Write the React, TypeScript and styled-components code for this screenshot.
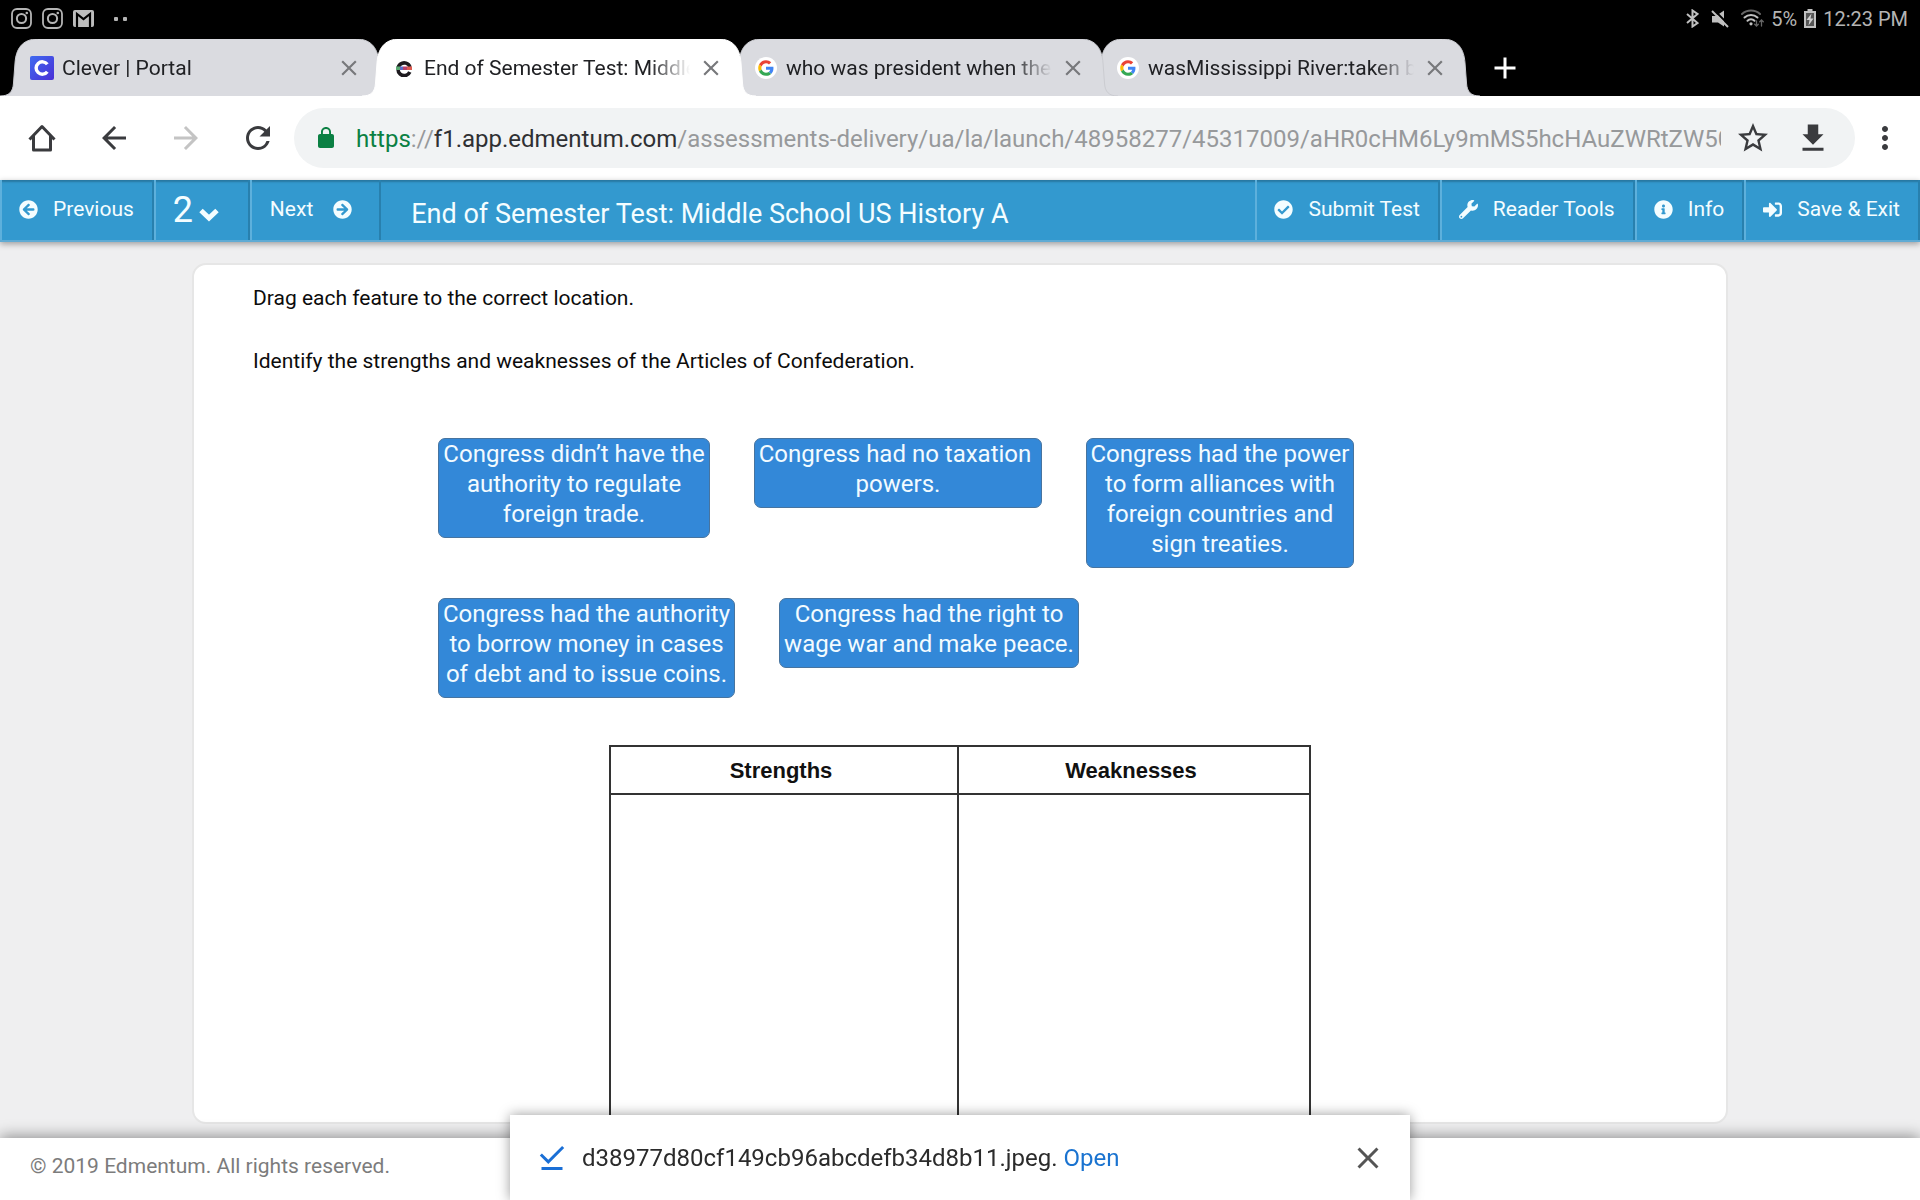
import React from "react";
import styled, { createGlobalStyle } from "styled-components";
import {
  MdAdd,
  MdArrowBack,
  MdArrowForward,
  MdClose,
  MdDownloadDone,
  MdMoreVert,
  MdRefresh,
  MdStarBorder,
} from "react-icons/md";
import {
  FaArrowCircleLeft,
  FaArrowCircleRight,
  FaCheckCircle,
  FaInfoCircle,
  FaSignInAlt,
  FaWrench,
} from "react-icons/fa";

const GlobalStyle = createGlobalStyle`
  * { box-sizing: border-box; }
  body { margin: 0; font-family: Roboto, "Liberation Sans", sans-serif; }
  button, select { font: inherit; color: inherit; background: none; border: 0; padding: 0; margin: 0; cursor: pointer; }
  svg { display: block; flex: none; }
`;

const Screen = styled.div`
  display: flex;
  flex-direction: column;
  height: 100vh;
  overflow: hidden;
  background: #efeff0;
`;

/* ---------- status bar ---------- */

const StatusBar = styled.div`
  display: flex;
  align-items: center;
  justify-content: space-between;
  height: 39px;
  flex: none;
  padding: 0 12px 2px 11px;
  background: #000;
  color: #b4b4b4;
  font-size: 20px;
  line-height: 24px;
`;

const StatusGroup = styled.div<{ $gap: number }>`
  display: flex;
  align-items: center;
  gap: ${(p) => p.$gap}px;
`;

/* ---------- tab strip ---------- */

const TabStrip = styled.div`
  display: flex;
  height: 57px;
  flex: none;
  background: #000;
`;

const TabShell = styled.div<{ $color: string; $layer: number }>`
  position: relative;
  z-index: ${(p) => p.$layer};
  display: flex;
  align-items: center;
  flex: 0 1 394px;
  min-width: 0;
  margin-right: -32px;
  padding: 0 32px 0 30px;
  color: ${(p) => p.$color};
  &::before {
    content: "";
    position: absolute;
    inset: 0 38px;
    background: currentColor;
    z-index: -1;
  }
`;

const TabEdge = styled.svg<{ $side: "left" | "right" }>`
  position: absolute;
  top: 0;
  ${(p) => p.$side}: 0;
  z-index: -1;
  ${(p) => (p.$side === "right" ? "transform: scaleX(-1);" : "")}
`;

const TabTitle = styled.button`
  flex: 1;
  min-width: 0;
  overflow: hidden;
  margin-left: 8px;
  text-align: left;
  white-space: nowrap;
  font-size: 21px;
  line-height: 28px;
  color: #202124;
  mask-image: linear-gradient(to right, #000 calc(100% - 40px), transparent);
`;

const TabClose = styled.button`
  margin-left: 8px;
  color: #77787b;
`;

const NewTab = styled.button`
  margin-left: 39px;
  color: #fff;
`;

const Favicon = styled.span`
  display: grid;
  place-items: center;
  width: 24px;
  height: 24px;
  flex: none;
`;

/* ---------- browser toolbar ---------- */

const Toolbar = styled.div`
  display: flex;
  align-items: center;
  height: 84px;
  flex: none;
  padding: 0 5px 0 6px;
  background: #fff;
  color: #3a3b3e;
`;

const ToolButton = styled.button<{ $faded?: boolean }>`
  display: grid;
  place-items: center;
  width: 72px;
  height: 60px;
  flex: none;
  color: ${(p) => (p.$faded ? "#c4c4c4" : "#3a3b3e")};
`;

const Omnibox = styled.div`
  display: flex;
  align-items: center;
  flex: 1;
  min-width: 0;
  height: 60px;
  border-radius: 30px;
  padding: 0 12px 0 20px;
  background: #f1f3f4;
`;

const Address = styled.div`
  flex: 1;
  min-width: 0;
  margin: 2px 2px 0 18px;
  overflow: hidden;
  white-space: nowrap;
  font-size: 24px;
  line-height: 32px;
  color: #97999b;
`;

const Secure = styled.span`
  color: #0b8043;
`;

const Host = styled.span`
  color: #2f3033;
`;

const OmniButton = styled.button`
  display: grid;
  place-items: center;
  width: 60px;
  height: 60px;
  flex: none;
  color: #3a3b3e;
`;

/* ---------- test header ---------- */

const Header = styled.header`
  position: relative;
  z-index: 2;
  display: flex;
  height: 62px;
  flex: none;
  background: #3399cf;
  color: #f4fdff;
  border-bottom: 2px solid #5fabd4;
  box-shadow: 0 2px 6px rgba(0, 0, 0, 0.35), inset 0 2px 2px rgba(0, 0, 0, 0.22);
`;

const HeaderCell = styled.div`
  display: flex;
  flex: none;
  border-left: 2px solid #5db0dc;
  border-right: 2px solid #2880ae;
`;

const HeaderButton = styled.button`
  display: flex;
  align-items: center;
  gap: 15px;
  height: 58px;
  padding: 0 18px 0 17px;
  font-size: 21px;
  line-height: 28px;
`;

const NextButton = styled(HeaderButton)`
  gap: 20px;
  padding: 0 27px 0 18px;
`;

const QuestionPicker = styled.label`
  display: flex;
  align-items: baseline;
  height: 60px;
  padding: 8px 29px 0 17px;
`;

const QuestionSelect = styled.select`
  appearance: none;
  width: 26px;
  font-size: 36px;
  line-height: 44px;
  color: #f4fdff;
`;

const HeaderTitle = styled.h1`
  flex: 1;
  min-width: 0;
  margin: 0;
  padding: 16px 0 0 30px;
  overflow: hidden;
  white-space: nowrap;
  font-size: 27px;
  line-height: 36px;
  font-weight: 400;
`;

/* ---------- question ---------- */

const Main = styled.main`
  display: flex;
  justify-content: center;
  flex: 1;
  min-height: 0;
  padding: 21px 0 14px;
`;

const Card = styled.section`
  display: flex;
  flex-direction: column;
  width: 80%;
  overflow: hidden;
  padding: 18px 59px 0;
  border: 2px solid #e6e6e6;
  border-radius: 14px;
  background: #fff;
`;

const Prompt = styled.p`
  margin: 0 0 33px;
  font-size: 21px;
  line-height: 30px;
  color: #0c0c0c;
`;

const Choices = styled.div`
  display: flex;
  flex-wrap: wrap;
  align-items: flex-start;
  gap: 30px 44px;
  width: 1044px;
  max-width: 100%;
  margin: 29px auto 0;
`;

const Choice = styled.button<{ $width: number }>`
  width: ${(p) => p.$width}px;
  padding: 0 3px 8px;
  border: 1px solid #47749f;
  border-radius: 7px;
  background: #3388d8;
  color: #f2fbff;
  font-size: 24px;
  line-height: 30px;
  text-align: center;
  cursor: grab;
`;

const SortTable = styled.table`
  width: 702px;
  max-width: 100%;
  flex: none;
  margin: 47px auto 0;
  border-collapse: collapse;
  table-layout: fixed;
  font-family: "Liberation Sans", Arial, sans-serif;
`;

const HeadCell = styled.th`
  height: 48px;
  padding: 2px 6px 0 0;
  border: 2px solid #333;
  font-size: 22px;
  line-height: 28px;
  color: #111;
`;

const StrengthColumn = styled.col`
  width: 348px;
`;

const DropCell = styled.td`
  height: 420px;
  border: 2px solid #333;
`;

/* ---------- footer and download notice ---------- */

const Footer = styled.footer`
  display: flex;
  align-items: center;
  height: 62px;
  flex: none;
  padding: 0 30px 6px;
  background: #fff;
  box-shadow: 0 -2px 14px rgba(0, 0, 0, 0.4);
  font-size: 21px;
  line-height: 28px;
  color: #7c7c7c;
`;

const Snackbar = styled.div`
  position: fixed;
  z-index: 5;
  bottom: 0;
  left: 50%;
  transform: translateX(-50%);
  display: flex;
  align-items: center;
  width: 900px;
  max-width: 100%;
  height: 85px;
  padding: 0 24px;
  background: #fff;
  box-shadow: 0 0 12px rgba(0, 0, 0, 0.4);
  color: #2b2b2b;
  font-size: 24px;
  line-height: 32px;
`;

const SnackText = styled.p`
  flex: 1;
  min-width: 0;
  margin: 0 0 0 12px;
`;

const OpenLink = styled.a`
  color: #1a73d0;
  text-decoration: none;
`;

/* ---------- drawings ---------- */

const InstagramGlyph = () => (
  <svg width="21" height="21" viewBox="0 0 21 21" fill="none" stroke="#b4b4b4">
    <rect x="1" y="1" width="19" height="19" rx="5" strokeWidth="1.8" />
    <circle cx="10.5" cy="10.5" r="4.6" strokeWidth="2" />
    <circle cx="15.8" cy="5" r="1.3" fill="#b4b4b4" stroke="none" />
  </svg>
);

const MailGlyph = () => (
  <svg width="21" height="17" viewBox="0 0 21 17">
    <rect width="21" height="17" rx="2" fill="#bdbdbd" />
    <path d="M4 17V4l6.500 5L17 4v13" fill="none" stroke="#000" strokeWidth="2.200" />
  </svg>
);

const MoreDots = () => (
  <svg width="14" height="4" viewBox="0 0 14 4" fill="#b4b4b4">
    <rect width="4" height="4" rx="1" />
    <rect x="9" width="4" height="4" rx="1" />
  </svg>
);

const BluetoothGlyph = () => (
  <svg width="13" height="19" viewBox="0 0 13 19" fill="none" stroke="#c0c0c0" strokeWidth="2">
    <path d="M1 5l10.500 9L6.500 17.500v-16L11.500 5 1 14" />
  </svg>
);

const MutedGlyph = () => (
  <svg width="18" height="18" viewBox="0 0 18 18">
    <path d="M1 6h4l8-5.500v16L7 12.500H1z" fill="#c0c0c0" />
    <path d="M2.500 -.5l16 16" stroke="#000" strokeWidth="2" />
    <path d="M1 1l16 16" stroke="#c0c0c0" strokeWidth="2" />
  </svg>
);

const WifiGlyph = () => (
  <svg width="23" height="19" viewBox="0 0 23 19" fill="none" strokeLinecap="round">
    <path d="M1 5a13.500 13.500 0 0 1 18 0" stroke="#666" strokeWidth="2" />
    <path d="M3.500 8.500a9.500 9.500 0 0 1 13 0" stroke="#c0c0c0" strokeWidth="2" />
    <path d="M6.500 11.800a5 5 0 0 1 7 0" stroke="#c0c0c0" strokeWidth="2" />
    <circle cx="10" cy="14.800" r="1.600" fill="#c0c0c0" />
    <path d="M15.500 12v5m-1.800-1.800l1.800 1.800 1.800-1.800M20.500 17v-6m-1.800 1.800l1.800-1.800 1.800 1.800" stroke="#666" strokeWidth="1.300" />
  </svg>
);

const BatteryGlyph = () => (
  <svg width="12" height="19" viewBox="0 0 12 19">
    <path d="M3.500 0h5v2H12v17H0V2h3.500z" fill="#c0c0c0" />
    <path d="M2 4h8v13H2z" fill="#555" />
    <path d="M7.500 4.500L2.500 11h3l-1 5.500 5-7h-3z" fill="#d0d0d0" />
  </svg>
);

const CleverIcon = () => (
  <svg width="24" height="24" viewBox="0 0 24 24">
    <defs>
      <linearGradient id="clever" x1="0" y1="0" x2="1" y2="1">
        <stop offset="0" stopColor="#3f6bf0" />
        <stop offset="1" stopColor="#4a2fd6" />
      </linearGradient>
    </defs>
    <rect width="24" height="24" rx="2" fill="url(#clever)" />
    <path d="M17.300 8.300A6.200 6.200 0 1 0 17.300 15.700" fill="none" stroke="#fff" strokeWidth="3.400" />
  </svg>
);

const EdmentumIcon = () => (
  <svg width="18" height="18" viewBox="0 0 18 18">
    <path d="M14.800 13A6.200 6.400 0 1 1 15 8" fill="none" stroke="#1d1a1f" strokeWidth="3.600" />
    <path d="M1 7.500h4v3.500H1z" fill="#5aa872" />
    <path d="M5 7.500h3v3.500H5z" fill="#5b6cc4" />
    <path d="M8 7.500h4v3.500H8z" fill="#b8406c" />
    <path d="M12 7.500h5v3.500h-5z" fill="#dd5a50" />
  </svg>
);

const GoogleIcon = () => (
  <svg width="22" height="22" viewBox="0 0 22 22">
    <circle cx="11" cy="11" r="11" fill="#fff" />
    <g transform="translate(3.200 3.200) scale(.325)">
      <path fill="#EA4335" d="M24 9.500c3.540 0 6.710 1.220 9.210 3.600l6.850-6.850C35.900 2.380 30.470 0 24 0 14.620 0 6.510 5.380 2.560 13.220l7.980 6.190C12.430 13.720 17.740 9.500 24 9.500z" />
      <path fill="#4285F4" d="M46.980 24.550c0-1.570-.15-3.090-.38-4.550H24v9.020h12.940c-.58 2.960-2.260 5.480-4.780 7.180l7.730 6c4.510-4.180 7.090-10.360 7.090-17.650z" />
      <path fill="#FBBC05" d="M10.530 28.590c-.48-1.450-.76-2.990-.76-4.590s.27-3.140.76-4.590l-7.980-6.190C.92 16.460 0 20.120 0 24c0 3.880.92 7.540 2.560 10.780l7.970-6.190z" />
      <path fill="#34A853" d="M24 48c6.480 0 11.930-2.130 15.890-5.810l-7.730-6c-2.150 1.450-4.920 2.300-8.160 2.300-6.260 0-11.570-4.220-13.470-9.910l-7.980 6.190C6.510 42.620 14.620 48 24 48z" />
    </g>
  </svg>
);

const HomeGlyph = () => (
  <svg width="28" height="28" viewBox="0 0 28 28" fill="none" stroke="currentColor" strokeWidth="3" strokeLinejoin="round">
    <path d="M1.500 15.500 14 2.500l12.500 13" />
    <path d="M5.500 12v14h17V12" />
  </svg>
);

const LockGlyph = () => (
  <svg width="24" height="24" viewBox="0 0 24 24" fill="#0b8043">
    <path d="M18 8h-1V6c0-2.760-2.240-5-5-5S7 3.240 7 6v2H6c-1.100 0-2 .9-2 2v10c0 1.100.9 2 2 2h12c1.100 0 2-.9 2-2V10c0-1.100-.9-2-2-2zm-2.900 0H8.900V6a3.100 3.100 0 0 1 6.200 0z" />
  </svg>
);

const DownloadGlyph = () => (
  <svg width="36" height="36" viewBox="0 0 24 24" fill="currentColor">
    <path d="M19 9.500h-3.500V3h-7v6.500H5l7 7zM5 18.500V20.500h14v-2z" />
  </svg>
);

const ChevronGlyph = () => (
  <svg width="20" height="15" viewBox="0 0 20 15" fill="none" stroke="currentColor" strokeWidth="5">
    <path d="M2 3.500l8 7.500 8-7.500" />
  </svg>
);

type TabProps = { icon: React.ReactNode; title: string; layer: number; active?: boolean };

function Edge({ side, fill, outline }: { side: "left" | "right"; fill: string; outline: string }) {
  return (
    <TabEdge $side={side} width="40" height="57" viewBox="0 0 40 57" aria-hidden="true">
      <path d="M0 57C9 57 13 53 13.500 44L15 24C16 10 22 0 38 0H40V57Z" fill={fill} />
      <path d="M0 57C9 57 13 53 13.500 44L15 24C16 10 22 0 38 0" fill="none" stroke={outline} />
    </TabEdge>
  );
}

function Tab({ icon, title, layer, active }: TabProps) {
  const fill = active ? "#ffffff" : "#dadbe0";
  const outline = active ? "#ffffff" : "#cbccd1";
  return (
    <TabShell $color={fill} $layer={layer}>
      <Edge side="left" fill={fill} outline={outline} />
      <Edge side="right" fill={fill} outline={outline} />
      <Favicon>{icon}</Favicon>
      <TabTitle>{title}</TabTitle>
      <TabClose aria-label="Close tab">
        <MdClose size={26} />
      </TabClose>
    </TabShell>
  );
}

const choices = [
  { text: "Congress didn’t have the authority to regulate foreign trade.", width: 272 },
  { text: "Congress had no taxation\u00a0 powers.", width: 288 },
  { text: "Congress had the power to form alliances with foreign countries and sign treaties.", width: 268 },
  { text: "Congress had the authority to borrow money in cases of debt and to issue coins.", width: 297 },
  { text: "Congress had the right to wage war and make peace.", width: 300 },
];

export default function App() {
  return (
    <Screen>
      <GlobalStyle />
      <StatusBar>
        <StatusGroup $gap={10}>
          <InstagramGlyph />
          <InstagramGlyph />
          <MailGlyph />
          <span />
          <MoreDots />
        </StatusGroup>
        <StatusGroup $gap={7}>
          <StatusGroup $gap={12}>
            <BluetoothGlyph />
            <MutedGlyph />
            <WifiGlyph />
          </StatusGroup>
          <span>5%</span>
          <BatteryGlyph />
          <span>12:23 PM</span>
        </StatusGroup>
      </StatusBar>

      <TabStrip>
        <Tab icon={<CleverIcon />} title="Clever | Portal" layer={1} />
        <Tab icon={<EdmentumIcon />} title="End of Semester Test: Middle School" layer={4} active />
        <Tab icon={<GoogleIcon />} title="who was president when the" layer={3} />
        <Tab icon={<GoogleIcon />} title="wasMississippi River:taken by" layer={2} />
        <NewTab aria-label="New tab">
          <MdAdd size={36} />
        </NewTab>
      </TabStrip>

      <Toolbar>
        <ToolButton aria-label="Home"><HomeGlyph /></ToolButton>
        <ToolButton aria-label="Back"><MdArrowBack size={36} /></ToolButton>
        <ToolButton aria-label="Forward" $faded><MdArrowForward size={36} /></ToolButton>
        <ToolButton aria-label="Reload"><MdRefresh size={36} /></ToolButton>
        <Omnibox>
          <LockGlyph />
          <Address role="textbox" tabIndex={0} aria-label="Address">
            <Secure>https</Secure>://<Host>f1.app.edmentum.com</Host>
            /assessments-delivery/ua/la/launch/48958277/45317009/aHR0cHM6Ly9mMS5hcHAuZWRtZW50dW0
          </Address>
          <OmniButton aria-label="Bookmark"><MdStarBorder size={36} /></OmniButton>
          <OmniButton aria-label="Download"><DownloadGlyph /></OmniButton>
        </Omnibox>
        <OmniButton aria-label="Menu"><MdMoreVert size={36} /></OmniButton>
      </Toolbar>

      <Header>
        <HeaderCell>
          <HeaderButton><FaArrowCircleLeft size={19} />Previous</HeaderButton>
        </HeaderCell>
        <HeaderCell>
          <QuestionPicker>
            <QuestionSelect aria-label="Question" defaultValue="2">
              <option>1</option>
              <option>2</option>
              <option>3</option>
            </QuestionSelect>
            <ChevronGlyph />
          </QuestionPicker>
        </HeaderCell>
        <HeaderCell>
          <NextButton>Next<FaArrowCircleRight size={19} /></NextButton>
        </HeaderCell>
        <HeaderTitle>End of Semester Test: Middle School US History A</HeaderTitle>
        <HeaderCell>
          <HeaderButton><FaCheckCircle size={19} />Submit Test</HeaderButton>
        </HeaderCell>
        <HeaderCell>
          <HeaderButton><FaWrench size={19} />Reader Tools</HeaderButton>
        </HeaderCell>
        <HeaderCell>
          <HeaderButton><FaInfoCircle size={19} />Info</HeaderButton>
        </HeaderCell>
        <HeaderCell>
          <HeaderButton><FaSignInAlt size={19} />Save &amp; Exit</HeaderButton>
        </HeaderCell>
      </Header>

      <Main>
        <Card>
          <Prompt>Drag each feature to the correct location.</Prompt>
          <Prompt>Identify the strengths and weaknesses of the Articles of Confederation.</Prompt>
          <Choices>
            {choices.map((c) => (
              <Choice key={c.text} $width={c.width} draggable>
                {c.text}
              </Choice>
            ))}
          </Choices>
          <SortTable>
            <colgroup>
              <StrengthColumn />
              <col />
            </colgroup>
            <thead>
              <tr>
                <HeadCell scope="col">Strengths</HeadCell>
                <HeadCell scope="col">Weaknesses</HeadCell>
              </tr>
            </thead>
            <tbody>
              <tr>
                <DropCell />
                <DropCell />
              </tr>
            </tbody>
          </SortTable>
        </Card>
      </Main>

      <Footer>© 2019 Edmentum. All rights reserved.</Footer>

      <Snackbar role="status">
        <MdDownloadDone size={36} color="#1a6fd6" />
        <SnackText>
          d38977d80cf149cb96abcdefb34d8b11.jpeg. <OpenLink href="#open">Open</OpenLink>
        </SnackText>
        <button aria-label="Dismiss">
          <MdClose size={36} color="#555" />
        </button>
      </Snackbar>
    </Screen>
  );
}
